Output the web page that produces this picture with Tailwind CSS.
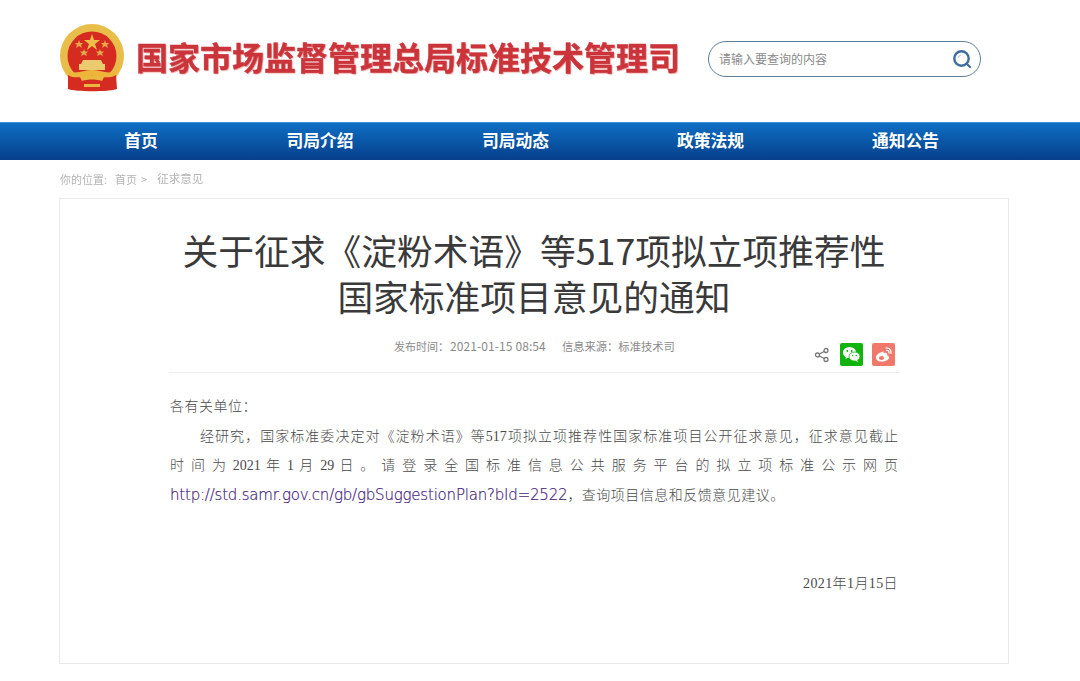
<!DOCTYPE html>
<html lang="zh-CN">
<head>
<meta charset="utf-8">
<title>关于征求意见的通知</title>
<script src="https://cdn.jsdelivr.net/npm/@tailwindcss/browser@4"></script>
</head>
<body class="m-0 bg-white overflow-hidden font-['Noto_Sans_CJK_SC',sans-serif]">
<div class="w-[1080px] h-[681px] overflow-hidden flex flex-col">
  <header class="h-[122px] shrink-0 flex items-center pl-[59px] pb-[6px]">
    <svg class="w-[68px] h-[70px] shrink-0" viewBox="0 0 68 70">
      <circle cx="33" cy="33" r="32" fill="#e9bd4a"/>
      <circle cx="33" cy="33" r="24.5" fill="#d52b20"/>
      <polygon points="33,11 35,17 41,17 36,21 38,27 33,23 28,27 30,21 25,17 31,17" fill="#eec04a"/>
      <polygon points="20,17 21,20 24,20 22,22 23,25 20,23 17,25 18,22 16,20 19,20" fill="#e9a94a"/>
      <polygon points="46,17 47,20 50,20 48,22 49,25 46,23 43,25 44,22 42,20 45,20" fill="#e9a94a"/>
      <polygon points="25,26 26,28.5 29,28.5 27,30.5 28,33 25,31.5 22,33 23,30.5 21,28.5 24,28.5" fill="#e9a94a"/>
      <polygon points="41,26 42,28.5 45,28.5 43,30.5 44,33 41,31.5 38,33 39,30.5 37,28.5 40,28.5" fill="#e9a94a"/>
      <path d="M24 37 H42 L44 41 H46 V47 H20 V41 H22Z" fill="#ecca6e"/>
      <path d="M8 46 C14 53 24 47 33 47 C42 47 52 53 58 46 L56 54 H10Z" fill="#edb63b"/>
      <path d="M9 52 C15 56 21 53 25 55 C29 52 37 52 41 55 C45 53 51 56 57 52 L58 66 C50 69 16 69 9 66Z" fill="#d52b20"/>
      <path d="M21 54 C27 52 39 52 45 54 L43 58 C37 56 29 56 23 58Z M25 61 H41 V64 H25Z" fill="#eab83f"/>
    </svg>
    <div class="ml-[9px] w-[543px] text-[32px] leading-[40px] font-bold whitespace-nowrap text-[#cb343a] [-webkit-text-stroke:0.4px_#cb343a] [text-shadow:1px_1px_1px_#e8a9a4] blur-[0.4px] mb-[4px]">国家市场监督管理总局标准技术管理司</div>
    <div class="ml-[29px] mt-[2px] w-[273px] h-[36px] rounded-full border border-[#5f7d9b] flex items-center justify-between pl-[10px] pr-[7px]">
      <span class="text-[12px] leading-none text-[#8a8a8a]">请输入要查询的内容</span>
      <svg class="w-[22px] h-[22px]" viewBox="0 0 22 22" fill="none">
        <circle cx="10.5" cy="10.5" r="7.2" stroke="#3f6d9e" stroke-width="2.4"/>
        <path d="M15.5 15.5 L19 19" stroke="#3f6d9e" stroke-width="2.2" stroke-linecap="round"/>
        <path d="M7 10 a4 4 0 0 1 3-3" stroke="#a9c0d8" stroke-width="1"/>
      </svg>
    </div>
  </header>

  <nav class="h-[38px] shrink-0 flex pl-[60px] pb-[1px] bg-gradient-to-b from-[#0f6fc4] to-[#073f8b] border-t border-[#3b93d6] text-white text-[16.8px] font-bold">
    <a class="w-[162px] flex items-center justify-center">首页</a>
    <a class="w-[196px] flex items-center justify-center">司局介绍</a>
    <a class="w-[195px] flex items-center justify-center">司局动态</a>
    <a class="w-[195px] flex items-center justify-center">政策法规</a>
    <a class="w-[195px] flex items-center justify-center">通知公告</a>
  </nav>

  <div class="h-[38px] shrink-0 pl-[60px] flex items-center text-[11px] text-[#b4b4b4] blur-[0.3px]">
    <span>你的位置:</span><span class="ml-[8px]">首页</span><span class="ml-[4px]">&gt;</span><span class="ml-[10px] text-[11.5px]">征求意见</span>
  </div>

  <main class="ml-[59px] w-[950px] h-[466px] shrink-0 border border-[#e9e9e9] px-[110px]">
    <h1 class="mt-[28px] text-center text-[35.75px] leading-[46px] font-normal text-[#3a3a3a] whitespace-nowrap">关于征求《淀粉术语》等517项拟立项推荐性<br>国家标准项目意见的通知</h1>
    <div class="relative h-[38px] mt-[16px] border-b border-[#ececec] -mx-[1px]">
      <div class="pt-[2px] pl-[225px] flex items-baseline text-[11px] leading-[18px] text-[#8a8a8a] whitespace-nowrap">
        <span>发布时间：</span><span class="ml-[1px] text-[12px] tracking-[0.1px]">2021-01-15 08:54</span>
        <span class="ml-[16px] text-[11.3px]">信息来源：标准技术司</span>
      </div>
      <div class="absolute right-[4px] top-[8px] flex items-center">
        <svg class="w-[16px] h-[16px] mr-[10px] mt-[1px]" viewBox="0 0 16 16" fill="none" stroke="#777" stroke-width="1.3">
          <circle cx="12" cy="3.5" r="2"/><circle cx="3.5" cy="8" r="2"/><circle cx="12" cy="12.5" r="2"/>
          <path d="M5.3 7 L10.2 4.5 M5.3 9 L10.2 11.5"/>
        </svg>
        <span class="w-[23px] h-[23px] rounded-[2px] bg-[#12b30f] flex items-center justify-center">
          <svg class="w-[19px] h-[19px]" viewBox="0 0 19 19" fill="#fff">
            <ellipse cx="7.5" cy="7.5" rx="6.5" ry="5.5"/>
            <path d="M4 11 L3.5 14 L7 12Z"/>
            <ellipse cx="12.5" cy="11.5" rx="5.5" ry="4.5" stroke="#12b30f" stroke-width="0.8"/>
            <path d="M15 15 L16 17 L13 15.5Z"/>
            <circle cx="5.3" cy="6" r="0.9" fill="#12b30f"/><circle cx="9.7" cy="6" r="0.9" fill="#12b30f"/>
            <circle cx="10.7" cy="10.5" r="0.7" fill="#12b30f"/><circle cx="14.3" cy="10.5" r="0.7" fill="#12b30f"/>
          </svg>
        </span>
        <span class="ml-[9px] w-[23px] h-[23px] rounded-[2px] bg-[#f0796b] flex items-center justify-center">
          <svg class="w-[19px] h-[19px]" viewBox="0 0 19 19" fill="none">
            <path d="M8 7 C4 8 1.5 11 2 13 C2.5 16 6 17 9 16.5 C13 16 15.5 14 15 12 C14.7 11 13.5 10.7 13 10.3 C13.8 8.5 13 7.5 11 7.7 L9.5 8.2 C10 6.5 9.3 6 8 7Z" fill="#fff"/>
            <ellipse cx="7.5" cy="13" rx="2.6" ry="2" fill="#f0796b"/>
            <path d="M12 3 C15 2.6 17.5 5 17 8.5 M12.5 5.3 C14 5 15.3 6.3 15 8" stroke="#fff" stroke-width="1.2" stroke-linecap="round"/>
          </svg>
        </span>
      </div>
    </div>
    <article class="text-[14px] tracking-[0.5px] text-[#4a4a4a] font-['Liberation_Serif','Noto_Sans_CJK_SC',serif] font-light">
      <p class="mt-[19px] leading-[30px]">各有关单位：</p>
      <p class="leading-[29px] pl-[30px] [text-align-last:justify] whitespace-nowrap tracking-normal">经研究，国家标准委决定对《淀粉术语》等517项拟立项推荐性国家标准项目公开征求意见，征求意见截止</p>
      <p class="leading-[29px] [text-align-last:justify] whitespace-nowrap tracking-normal">时 间 为 2021 年 1 月 29 日 。 请 登 录 全 国 标 准 信 息 公 共 服 务 平 台 的 拟 立 项 标 准 公 示 网 页</p>
      <p class="leading-[30px] whitespace-nowrap"><a class="text-[#46237e] text-[15px] font-['DejaVu_Sans',sans-serif] tracking-[-0.2px] [-webkit-text-stroke:0.2px_#46237e]">http://std.samr.gov.cn/gb/gbSuggestionPlan?bId=2522</a>，查询项目信息和反馈意见建议。</p>
      <p class="mt-[58px] text-right leading-[30px] tracking-[0.4px]">2021年1月15日</p>
    </article>
  </main>
</div>
</body>
</html>
